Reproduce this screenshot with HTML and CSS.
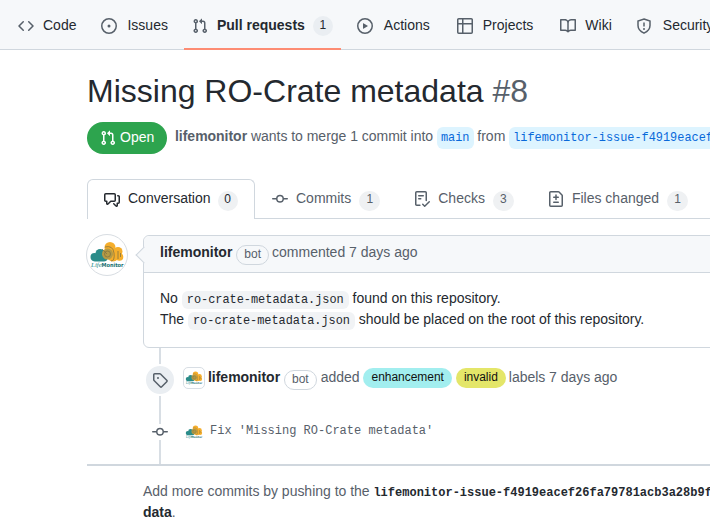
FILE: index.html
```html
<!DOCTYPE html>
<html lang="en">
<head>
<meta charset="utf-8">
<title>Missing RO-Crate metadata #8</title>
<link rel="stylesheet" href="styles.css">
</head>
<body>
<svg class="defs" aria-hidden="true">
  <symbol id="pr" viewBox="0 0 16 16"><path fill-rule="evenodd" d="M7.177 3.073L9.573.677A.25.25 0 0110 .854v4.792a.25.25 0 01-.427.177L7.177 3.427a.25.25 0 010-.354zM3.75 2.5a.75.75 0 100 1.5.75.75 0 000-1.5zm-2.25.75a2.25 2.25 0 113 2.122v5.256a2.251 2.251 0 11-1.5 0V5.372A2.25 2.25 0 011.5 3.25zM11 2.5h-1V4h1a1 1 0 011 1v5.628a2.251 2.251 0 101.5 0V5A2.5 2.5 0 0011 2.5zm1 10.25a.75.75 0 111.5 0 .75.75 0 01-1.5 0zM3.75 12a.75.75 0 100 1.5.75.75 0 000-1.5z"/></symbol>
  <symbol id="commit" viewBox="0 0 16 16"><path fill-rule="evenodd" d="M10.5 7.75a2.5 2.5 0 11-5 0 2.5 2.5 0 015 0zm1.43.75a4.002 4.002 0 01-7.86 0H.75a.75.75 0 110-1.5h3.32a4.001 4.001 0 017.86 0h3.32a.75.75 0 110 1.5h-3.32z"/></symbol>
  <symbol id="logo" viewBox="0 0 40 40">
    <g fill="#2b8c89"><circle cx="7.500" cy="22" r="4"/><circle cx="13" cy="18.500" r="4.500"/><circle cx="17" cy="22" r="4"/><rect x="5" y="20" width="15" height="6.500" rx="3"/></g>
    <g fill="#f5ae2c"><circle cx="23" cy="12.500" r="5.500"/><circle cx="31" cy="16.500" r="4.500"/><circle cx="32.500" cy="22" r="3.800"/><circle cx="26" cy="20" r="6.500"/></g>
    <circle cx="20.500" cy="19" r="5.500" fill="#b59a45"/>
    <g fill="none" stroke="#84733f" stroke-width=".8"><circle cx="20.500" cy="19" r="3"/><path d="M18 12q8-2 9 6t-3 8M15 14l5 5M31 16v8M33.500 18v4"/></g>
    <text class="logo-life" x="4" y="32">Life</text><text class="logo-monitor" x="14.500" y="32" textLength="22" lengthAdjust="spacingAndGlyphs">Monitor</text>
  </symbol>
</svg>

<nav class="repo-nav">
  <a class="nav-item code"><svg class="icon" viewBox="0 0 16 16"><path d="M4.720 3.220a.75.75 0 011.060 1.060L2.060 8l3.720 3.720a.75.75 0 11-1.060 1.060L.47 8.530a.75.75 0 010-1.060l4.250-4.250zm6.560 0a.75.75 0 10-1.060 1.060L13.940 8l-3.720 3.720a.75.75 0 101.060 1.060l4.250-4.250a.75.75 0 000-1.060l-4.250-4.250z"/></svg><span>Code</span></a>
  <a class="nav-item issues"><svg class="icon" viewBox="0 0 16 16"><path d="M8 9.500a1.500 1.500 0 100-3 1.500 1.500 0 000 3z"/><path fill-rule="evenodd" d="M8 0a8 8 0 100 16A8 8 0 008 0zM1.500 8a6.500 6.500 0 1113 0 6.500 6.500 0 01-13 0z"/></svg><span>Issues</span></a>
  <a class="nav-item pulls selected"><svg class="icon"><use href="#pr"/></svg><span>Pull requests</span><span class="counter">1</span></a>
  <a class="nav-item actions"><svg class="icon" viewBox="0 0 16 16"><path fill-rule="evenodd" d="M1.500 8a6.500 6.500 0 1113 0 6.500 6.500 0 01-13 0zM8 0a8 8 0 100 16A8 8 0 008 0zM6.379 5.227A.25.25 0 006 5.442v5.117a.25.25 0 00.379.214l4.264-2.559a.25.25 0 000-.428L6.379 5.227z"/></svg><span>Actions</span></a>
  <a class="nav-item projects"><svg class="icon" viewBox="0 0 16 16"><path fill-rule="evenodd" d="M0 1.750C0 .784.784 0 1.750 0h12.500C15.216 0 16 .784 16 1.750v12.500A1.750 1.750 0 0114.250 16H1.750A1.750 1.750 0 010 14.250V1.750zM6.500 6.500v8h7.750a.25.25 0 00.25-.25V6.500h-8zm8-1.500V1.750a.25.25 0 00-.25-.25H6.500V5h8zM5 5V1.500H1.750a.25.25 0 00-.25.25V5H5zM1.500 6.500v7.750c0 .138.112.25.25.25H5v-8H1.500z"/></svg><span>Projects</span></a>
  <a class="nav-item wiki"><svg class="icon" viewBox="0 0 16 16"><path fill-rule="evenodd" d="M0 1.750A.75.75 0 01.75 1h4.253c1.227 0 2.317.59 3 1.501A3.744 3.744 0 0111.006 1h4.245a.75.75 0 01.75.75v10.500a.75.75 0 01-.75.75h-4.507a2.250 2.250 0 00-1.591.659l-.622.621a.75.75 0 01-1.060 0l-.622-.621A2.250 2.250 0 005.258 13H.75a.75.75 0 01-.75-.75V1.750zm8.755 3a2.250 2.250 0 012.250-2.250H14.500v9h-3.757c-.71 0-1.400.201-1.992.572l.004-7.322zm-1.504 7.324l.004-5.073-.002-2.253A2.250 2.250 0 005.003 2.500H1.500v9h3.757a3.750 3.750 0 011.994.574z"/></svg><span>Wiki</span></a>
  <a class="nav-item security"><svg class="icon line" viewBox="0 0 16 16"><path d="M8 1l6 2v4.500c0 3.200-2.300 5.900-6 7.600-3.700-1.700-6-4.400-6-7.600V3zM8 4.500v4"/><circle class="dot" cx="8" cy="11" r="1"/></svg><span>Security</span></a>
</nav>

<main class="page">
  <h1 class="title">Missing RO-Crate metadata <span>#8</span></h1>
  <div class="summary">
    <span class="state"><svg class="icon"><use href="#pr"/></svg><span>Open</span></span>
    <p class="merge-info"><strong>lifemonitor</strong> wants to merge 1 commit into <code class="branch">main</code> from <code class="branch head">lifemonitor-issue-f4919eacef26fa79781acb3a28b9f</code></p>
  </div>

  <nav class="tabs">
    <a class="tab current"><svg class="icon" viewBox="0 0 16 16"><path fill-rule="evenodd" d="M1.500 2.750a.25.25 0 01.25-.25h8.500a.25.25 0 01.25.25v5.500a.25.25 0 01-.25.25h-3.500a.75.75 0 00-.53.22L3.500 11.440V9.250a.75.75 0 00-.75-.75h-1a.25.25 0 01-.25-.25v-5.500zM1.750 1A1.750 1.750 0 000 2.750v5.500C0 9.216.784 10 1.750 10H2v1.543a1.457 1.457 0 002.487 1.030L7.061 10h3.189A1.750 1.750 0 0012 8.250v-5.500A1.750 1.750 0 0010.250 1h-8.500zM14.500 4.750a.25.25 0 00-.25-.25h-.5a.75.75 0 110-1.500h.5c.966 0 1.750.784 1.750 1.750v5.500A1.750 1.750 0 0114.250 12H14v1.543a1.457 1.457 0 01-2.487 1.030L9.220 12.280a.75.75 0 111.060-1.060l2.220 2.220v-2.190a.75.75 0 01.75-.75h1a.25.25 0 00.25-.25v-5.500z"/></svg><span>Conversation</span><span class="counter">0</span></a>
    <a class="tab"><svg class="icon"><use href="#commit"/></svg><span>Commits</span><span class="counter">1</span></a>
    <a class="tab"><svg class="icon" viewBox="0 0 16 16"><path fill-rule="evenodd" d="M2.500 1.750a.25.25 0 01.25-.25h8.500a.25.25 0 01.25.25v7.736a.75.75 0 101.500 0V1.750A1.750 1.750 0 0011.250 0h-8.500A1.750 1.750 0 001 1.750v11.500c0 .966.784 1.750 1.750 1.750h3.170a.75.75 0 000-1.500H2.750a.25.25 0 01-.25-.25V1.750zM4.750 4a.75.75 0 000 1.500h4.500a.75.75 0 000-1.500h-4.500zM4 7.750A.75.75 0 014.750 7h2a.75.75 0 010 1.500h-2A.75.75 0 014 7.750zm11.774 3.537a.75.75 0 00-1.048-1.074L10.700 14.145 9.281 12.720a.75.75 0 00-1.062 1.058l1.943 1.950a.75.75 0 001.055.008l4.557-4.450z"/></svg><span>Checks</span><span class="counter">3</span></a>
    <a class="tab"><svg class="icon" viewBox="0 0 16 16"><path fill-rule="evenodd" d="M2.750 1.500a.25.25 0 00-.25.25v12.500c0 .138.112.25.25.25h10.500a.25.25 0 00.25-.25V4.664a.25.25 0 00-.073-.177l-2.914-2.914a.25.25 0 00-.177-.073H2.750zM1 1.750C1 .784 1.784 0 2.750 0h7.586c.464 0 .909.184 1.237.513l2.914 2.914c.329.328.513.773.513 1.237v9.586A1.750 1.750 0 0113.250 16H2.750A1.750 1.750 0 011 14.250V1.750zm7 1.500a.75.75 0 01.75.75v1.500h1.500a.75.75 0 010 1.500h-1.500v1.500a.75.75 0 01-1.500 0V7h-1.500a.75.75 0 010-1.500h1.500V4A.75.75 0 018 3.250zm-3 8a.75.75 0 01.75-.75h4.500a.75.75 0 010 1.500h-4.500a.75.75 0 01-.75-.75z"/></svg><span>Files changed</span><span class="counter">1</span></a>
  </nav>

  <section class="discussion">
    <div class="comment-row">
      <svg class="avatar"><use href="#logo"/></svg>
      <article class="comment">
        <header class="comment-header"><strong>lifemonitor</strong><span class="bot">bot</span><span>commented 7 days ago</span></header>
        <div class="comment-body">
          <p>No <code>ro-crate-metadata.json</code> found on this repository.</p>
          <p>The <code>ro-crate-metadata.json</code> should be placed on the root of this repository.</p>
        </div>
      </article>
    </div>
    <div class="timeline">
      <div class="event label-event">
        <span class="event-badge"><svg class="icon" viewBox="0 0 16 16"><path fill-rule="evenodd" d="M2.500 7.775V2.750a.25.25 0 01.25-.25h5.025a.25.25 0 01.177.073l6.250 6.250a.25.25 0 010 .354l-5.025 5.025a.25.25 0 01-.354 0l-6.250-6.250a.25.25 0 01-.073-.177zm-1.500 0V2.750C1 1.784 1.784 1 2.750 1h5.025c.464 0 .91.184 1.238.513l6.250 6.250a1.750 1.750 0 010 2.474l-5.026 5.026a1.750 1.750 0 01-2.474 0l-6.250-6.250A1.750 1.750 0 011 7.775zM6 5a1 1 0 100 2 1 1 0 000-2z"/></svg></span>
        <svg class="avatar-small framed"><use href="#logo"/></svg>
        <strong>lifemonitor</strong><span class="bot">bot</span><span class="verb">added</span><span class="label enhancement">enhancement</span><span class="label invalid">invalid</span><span>labels 7 days ago</span>
      </div>
      <div class="event commit-event">
        <span class="commit-badge"><svg class="icon"><use href="#commit"/></svg></span>
        <svg class="avatar-small"><use href="#logo"/></svg>
        <code>Fix 'Missing RO-Crate metadata'</code>
      </div>
    </div>
  </section>
  <p class="push-hint">Add more commits by pushing to the <code>lifemonitor-issue-f4919eacef26fa79781acb3a28b9f</code><br><strong>data</strong>.</p>
</main>
</body>
</html>
```
FILE: styles.css
```css
* { box-sizing: border-box; }
body {
  margin: 0;
  width: 710px;
  height: 526px;
  overflow: hidden;
  background: #fff;
  color: #57606a;
  font: 14px/21px "Liberation Sans", Arial, sans-serif;
}
p, h1 { margin: 0; }
code { font: 12px/18px "Liberation Mono", monospace; letter-spacing: 0; }
strong { font-weight: 700; }
.defs { position: absolute; width: 0; height: 0; }
.icon { width: 16px; height: 16px; flex: none; fill: currentColor; }
.icon.line { fill: none; stroke: currentColor; stroke-width: 1.5; }
.icon .dot { fill: currentColor; stroke: none; }
.logo-life { font: italic 7px "Liberation Serif", serif; fill: #2b8c89; }
.logo-monitor { font: bold 5.5px "DejaVu Sans", sans-serif; fill: #176f70; }

.repo-nav {
  display: flex;
  gap: 8px;
  height: 50px;
  padding-left: 10px;
  background: #f6f8fa;
  border-bottom: 1px solid #d0d7de;
}
.nav-item {
  display: flex;
  flex: none;
  align-items: center;
  height: 50px;
  padding: 2px 8px 0;
  white-space: nowrap;
}
.nav-item > span { color: #24292f; margin-bottom: 2px; }
.nav-item > .counter { margin-bottom: 0; }
.nav-item .icon { margin-right: 9px; }
.nav-item.issues { margin-left: 1px; }
.nav-item.issues .icon { margin-right: 10px; }
.nav-item.actions .icon { margin-right: 11px; }
.nav-item.projects { margin-left: 3px; }
.nav-item.projects .icon { margin-right: 10px; }
.nav-item.wiki { margin-left: 3px; }
.nav-item.security .icon { margin-right: 11px; }
.nav-item.selected { font-weight: 700; box-shadow: inset 0 -2px #fd8c73; }
.counter {
  min-width: 20px;
  height: 20px;
  margin-left: 8px;
  padding: 0 6px;
  border-radius: 10px;
  background: #eaeef2;
  font: 12px/18px "Liberation Sans", Arial, sans-serif;
  text-align: center;
}

.page { padding-left: 87px; }
.title {
  margin-top: 23px;
  color: #24292f;
  font-size: 32px;
  font-weight: 400;
  line-height: 36px;
  white-space: nowrap;
}
.title span { color: #57606a; }
.summary { display: flex; align-items: center; margin-top: 13px; }
.state {
  display: flex;
  flex: none;
  align-items: center;
  gap: 4px;
  width: 80px;
  height: 32px;
  padding-left: 13px;
  border-radius: 16px;
  background: #2da44e;
  color: #fff;
}
.state span { margin-bottom: 2px; }
.merge-info {
  margin: -2px 0 0 8px;
  letter-spacing: -.025px;
  white-space: nowrap;
}
.branch {
  display: inline-block;
  padding: 2px 4px;
  border-radius: 6px;
  background: #ddf4ff;
  color: #0969da;
  font-size: 11.9px;
}

.tabs {
  display: flex;
  height: 40px;
  margin-top: 25px;
  box-shadow: inset 0 -1px #d0d7de;
}
.tab {
  display: flex;
  flex: none;
  align-items: center;
  padding: 0 17px;
  white-space: nowrap;
}
.tab.current {
  width: 168px;
  padding: 0 15px 0 16px;
  border: 1px solid #d0d7de;
  border-bottom: 0;
  border-radius: 6px 6px 0 0;
  background: #fff;
  color: #24292f;
}
.tab > span { margin-bottom: 2px; }
.tab .icon { margin-right: 8px; }
.tab .counter {
  min-width: 21px;
  margin: 3px 0 0 8px;
  background: #eff1f3;
  line-height: 17px;
}
.tab.current .counter { min-width: 20px; margin: 2px 0 0 7px; }

.comment-row { display: flex; gap: 15px; margin-top: 16px; height: 113px; }
.avatar {
  flex: none;
  width: 42px;
  height: 42px;
  margin: -1px 0 0 -1px;
  border: 1px solid #d8dde2;
  border-radius: 50%;
}
.comment {
  position: relative;
  flex: none;
  width: 600px;
  height: 113px;
  border: 1px solid #d0d7de;
  border-radius: 6px;
}
.comment::before {
  content: "";
  position: absolute;
  top: 13px;
  left: -6px;
  width: 11px;
  height: 11px;
  border: 1px solid #d0d7de;
  border-width: 0 0 1px 1px;
  background: #f6f8fa;
  transform: rotate(45deg);
}
.comment-header {
  display: flex;
  align-items: center;
  gap: 4px;
  height: 37px;
  padding: 0 16px 3px;
  border-bottom: 1px solid #d0d7de;
  border-radius: 6px 6px 0 0;
  background: #f6f8fa;
}
.comment-header strong, .label-event strong { color: #24292f; }
.bot {
  height: 20px;
  margin-top: 4px;
  padding: 0 7px;
  border: 1px solid #d0d7de;
  border-radius: 10px;
  font-size: 12px;
  line-height: 16px;
}
.comment-header .bot { margin-right: -1px; }
.comment-body {
  padding: 15px 16px;
  color: #24292f;
  letter-spacing: -.015px;
  white-space: nowrap;
}
.comment-body code {
  padding: 2px 5px;
  border-radius: 6px;
  background: #f1f3f5;
  font-size: 11.9px;
}
.timeline {
  display: grid;
  grid-template-rows: 58px 58px;
  width: 623px;
  height: 116px;
  background: linear-gradient(#d8dee4, #d8dee4) 72px 0 / 2px 100% no-repeat;
}
.event { display: flex; white-space: nowrap; }
.label-event { padding: 16px 0 0 57px; letter-spacing: -.025px; }
.event-badge {
  display: grid;
  place-items: center;
  width: 32px;
  height: 32px;
  border: 2px solid #fff;
  border-radius: 50%;
  background: #eaeef2;
}
.avatar-small { flex: none; width: 20px; height: 20px; }
.framed {
  width: 22px;
  height: 22px;
  margin: 3px 3px 0 7px;
  border: 1px solid #d8dee4;
  border-radius: 5px;
}
.label-event > strong, .label-event > span:not(.event-badge) { margin-top: 3px; }
.label-event > .bot:not(.event-badge) { margin: 6px 4px 0; }
.label-event > .label:not(.event-badge) {
  height: 20px;
  margin-top: 4px;
  margin-left: 4px;
  padding: 0 8px;
  border-radius: 10px;
  color: #111;
  font-size: 12px;
  line-height: 18px;
}
.enhancement { background: #a2eeef; }
.invalid { background: #e4e669; margin-right: 3px; }
.commit-event { align-items: center; padding: 0 0 7px 65px; }
.commit-badge { display: grid; width: 16px; height: 16px; background: #fff; }
.commit-event .avatar-small { margin: 0 6px 0 16px; }
.commit-event code { margin-bottom: 2px; }
.push-hint {
  padding: 15px 0 0 56px;
  border-top: 2px solid #d0d7de;
  letter-spacing: -.02px;
  white-space: nowrap;
}
.push-hint code { color: #24292f; font-weight: 700; }
.push-hint strong { color: #24292f; }
```
